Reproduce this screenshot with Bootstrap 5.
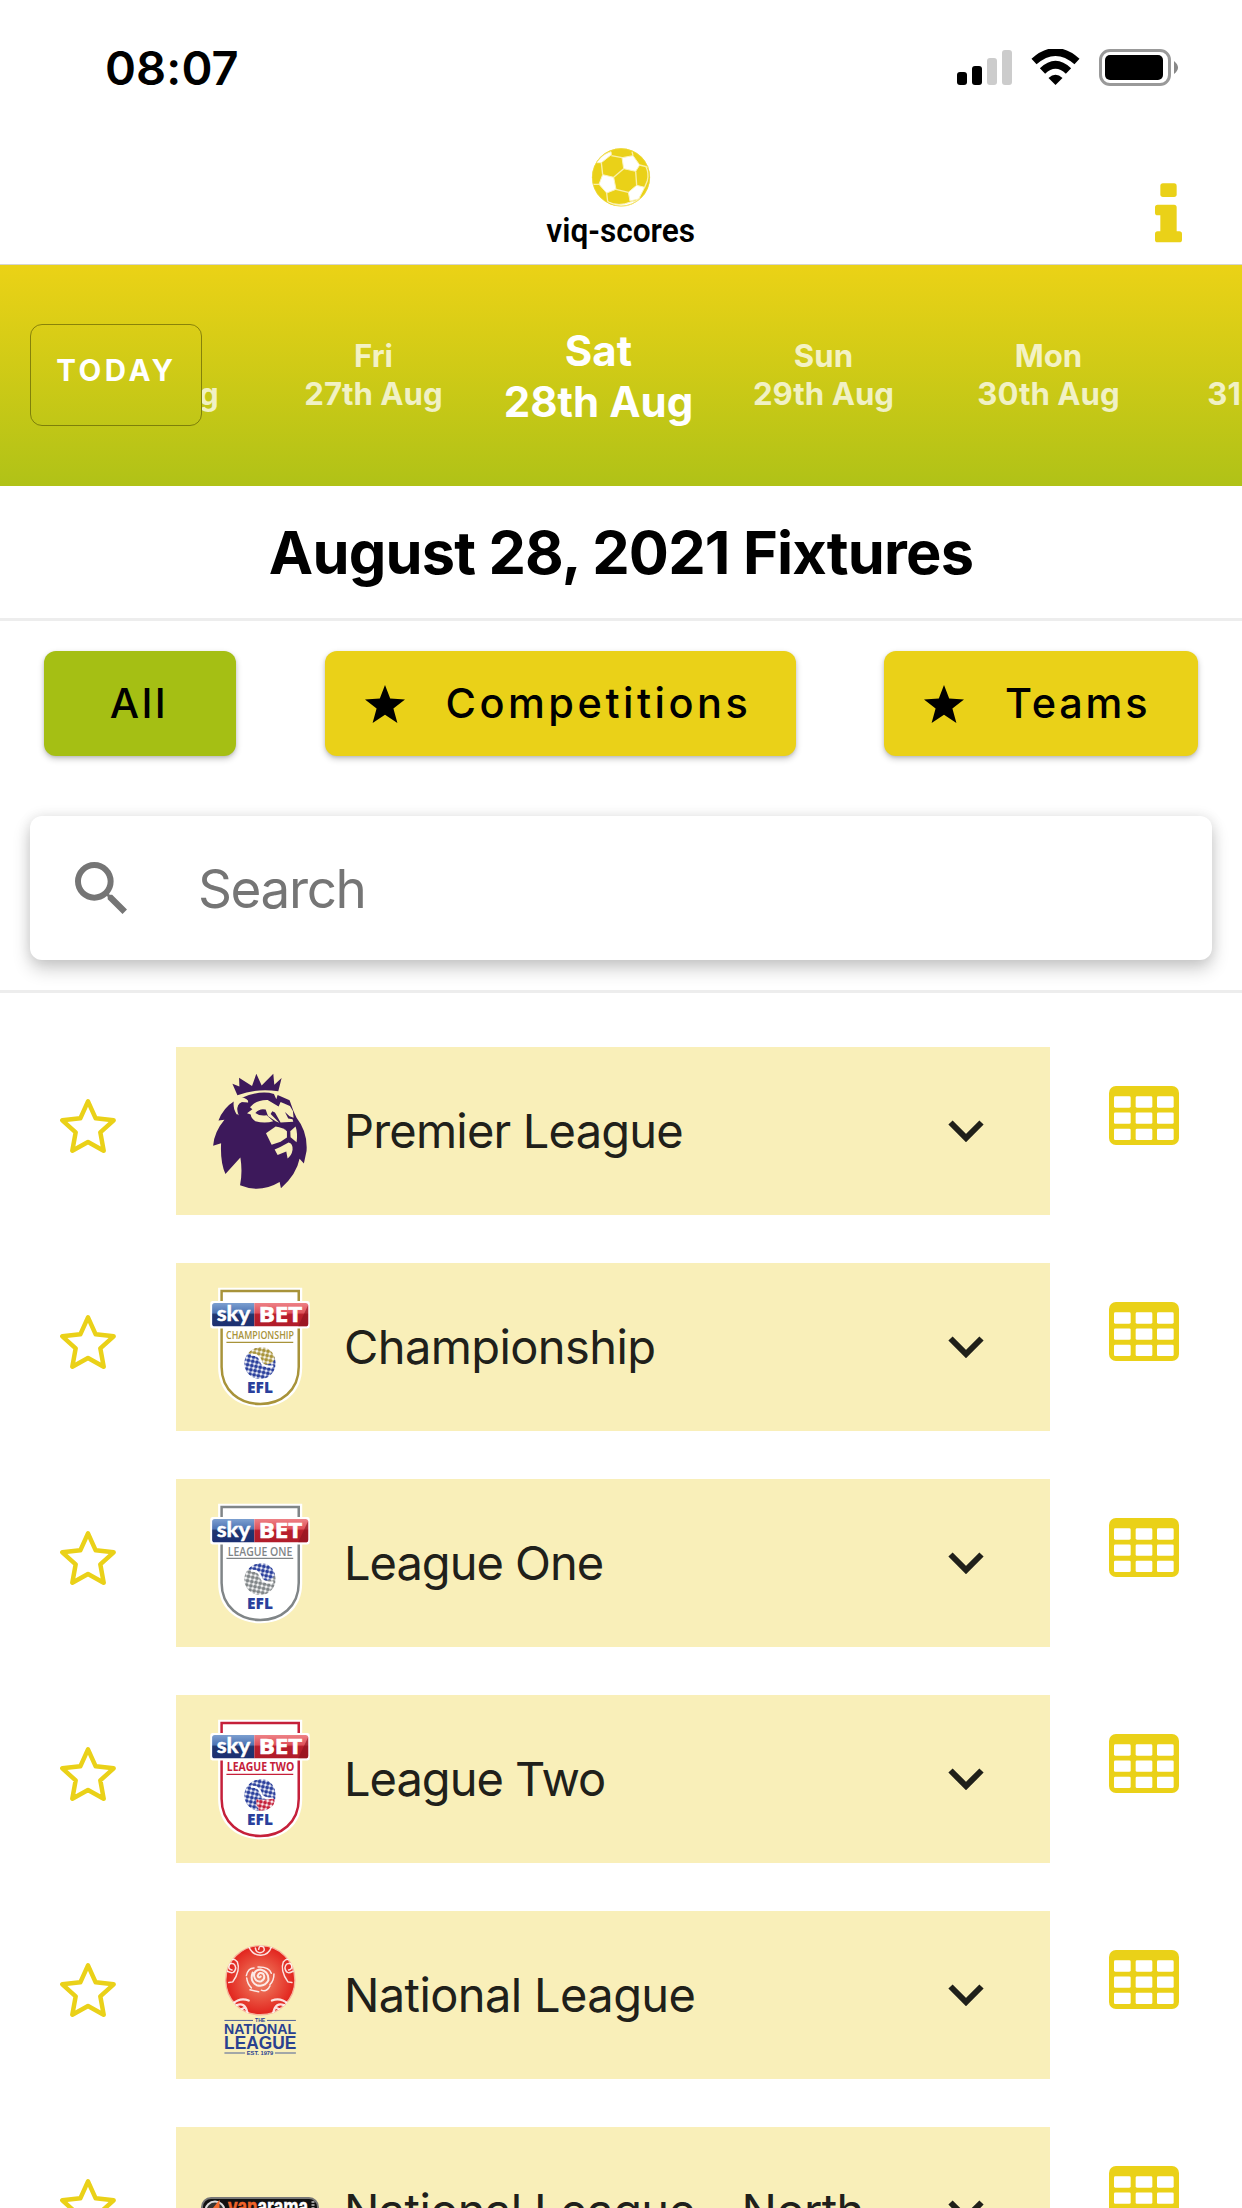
<!DOCTYPE html>
<html lang="en">
<head>
<meta charset="utf-8">
<meta name="viewport" content="width=device-width, initial-scale=1">
<title>viq-scores</title>
<link href="https://cdn.jsdelivr.net/npm/bootstrap@5.3.0/dist/css/bootstrap.min.css" rel="stylesheet">
<style>
:root{--gold:#ead118;--green:#a5bf14}
html,body{height:2208px;overflow:hidden}
body{font-family:Inter,"Liberation Sans",sans-serif;color:#000;background:#fff;width:1242px;line-height:1.2}
svg{display:block;flex:none}
.statusbar{height:135px;padding:49px 63px 0 105px}
.clock{font-size:47px;font-weight:600;line-height:38px;letter-spacing:.1px}
.topbar{height:130px;border-bottom:1px solid #d5d5d0;padding:13px 60px 0 60px}
.side{width:27px}
.info{margin-top:35px}
.dates{height:221px;background:linear-gradient(#ebd216,#b0c217);padding-left:30px}
.btn-today{width:172px;height:102px;margin-top:59px;border:1px solid rgba(70,70,0,.55);border-radius:12px;color:#fff;font-size:29.5px;font-weight:700;letter-spacing:3.5px;padding:0 0 10px 1px;flex:none}
.strip{height:221px;overflow:hidden}
.strip-in{margin-left:-166px;padding-top:72px}
.day{width:225px;flex:none;text-align:center;font-size:31.200px;font-weight:700;line-height:38px;color:rgba(255,255,255,.75);white-space:nowrap}
.day.on{color:#fff;font-size:42px;line-height:51px;margin-top:-12px}
.title{height:135px;border-bottom:3px solid #ededed;font-size:59.5px;font-weight:700;letter-spacing:-.82px;line-height:133px;margin:0;white-space:nowrap}
.filters{padding:30px 44px 0 44px;height:195px}
.filter{height:105px;border-radius:12px;border:0;font-size:41.500px;font-weight:450;letter-spacing:2.8px;color:#000;background:var(--gold);box-shadow:0 3px 6px rgba(0,0,0,.22),0 1px 3px rgba(0,0,0,.1);padding:0;flex:none;white-space:nowrap}
.filter:hover{background:var(--gold)}
.f-all{width:192px;background:var(--green);padding-right:2px}.f-comp{width:471px;letter-spacing:3.5px}.f-team{width:314px}
.fstar{margin:0 41px 0 40px}
.searchbox{height:144px;margin:0 30px;border-radius:12px;background:#fff;box-shadow:0 9px 18px rgba(0,0,0,.2),0 0 14px rgba(0,0,0,.09);padding-left:45px}
.searchbox input{border:0;outline:0;font-size:53px;font-family:inherit;color:#757575;letter-spacing:-1.4px;margin-left:71px;padding:3px 0 0;width:700px;background:none}
.searchbox input::placeholder{color:#757575;opacity:1}
.searchwrap{height:177px;border-bottom:3px solid #ededed}
.leagues{padding-top:54px}
.league{height:168px;margin-bottom:48px}
.fav{width:176px;padding:52px 0 0 60px}
.panel{width:874px;height:168px;background:#f9efb9;color:#20201a;padding:0 66px 0 34px}
.lname{font-size:47px;letter-spacing:-.6px;margin-left:34px;white-space:nowrap}
.ls-tight{letter-spacing:-1px}
.ls-mid{letter-spacing:-.8px}
.tbl{padding:39px 0 0 59px}
.sponsor{margin:0 -9px}
.s-champ{--rim:#a8933a;--d1:#a8933a;--d2:#2a3f9c}
.s-one{--rim:#808587;--d1:#2a3f9c;--d2:#808587}
.s-two{--rim:#c5203a;--d1:#2a3f9c;--d2:#2a3f9c}
</style>
</head>
<body>
<svg width="0" height="0" class="position-absolute" aria-hidden="true">
 <defs>
  <linearGradient id="gb" x2="0" y2="1"><stop offset="0" stop-color="#7c9fd0"/><stop offset=".42" stop-color="#4d74b4"/><stop offset=".5" stop-color="#20366f"/><stop offset="1" stop-color="#1c2f72"/></linearGradient>
  <linearGradient id="gr" x2="0" y2="1"><stop offset="0" stop-color="#ee8186"/><stop offset=".42" stop-color="#df525b"/><stop offset=".5" stop-color="#b91e2c"/><stop offset="1" stop-color="#b01c2a"/></linearGradient>
  <radialGradient id="rose"><stop offset="0" stop-color="#ee8a6e"/><stop offset=".55" stop-color="#e9513f"/><stop offset="1" stop-color="#e2231d"/></radialGradient>
  <pattern id="dots" width="13" height="13" patternUnits="userSpaceOnUse" patternTransform="rotate(12)"><circle cx="6.5" cy="6.5" r="6" fill="#fff"/></pattern>
  <mask id="dotmask"><rect x="150" y="220" width="120" height="120" fill="url(#dots)"/></mask>
  <symbol id="star" viewBox="90 208 168 162"><path d="M174 215l23 51 54 6-40 36 10 55-47-26-47 26 10-55-40-36 54-6z" fill="none" stroke="#ead118" stroke-width="13.500" stroke-linejoin="round"/></symbol>
  <symbol id="fstar" viewBox="0 0 40 38"><path d="M20 0l5.2 13.6L40 14.5 28.4 23.6 32.4 38 20 29.8 7.600 38 11.600 23.600 0 14.500 14.800 13.600z"/></symbol>
  <symbol id="chev" viewBox="0 0 36 22"><path d="M2.500 2.500L18 18 33.500 2.500" fill="none" stroke="#20201a" stroke-width="6"/></symbol>
  <symbol id="grid" viewBox="627 168 210 177"><rect x="627" y="168" width="210" height="177" rx="21" fill="#ead118"/><g fill="#fff"><rect x="642" y="199" width="50" height="34" rx="4"/><rect x="707" y="199" width="50" height="34" rx="4"/><rect x="771" y="199" width="50" height="34" rx="4"/><rect x="642" y="247.500" width="50" height="34" rx="4"/><rect x="707" y="247.500" width="50" height="34" rx="4"/><rect x="771" y="247.500" width="50" height="34" rx="4"/><rect x="642" y="296" width="50" height="34" rx="4"/><rect x="707" y="296" width="50" height="34" rx="4"/><rect x="771" y="296" width="50" height="34" rx="4"/></g></symbol>
  <symbol id="shield" viewBox="60 46 300 370">
   <path d="M84 51H337V290C337 370 278 411 211 411S84 370 84 290Z" fill="#fff"/>
   <path d="M94.500 61H326.500V290C326.500 362 272 401 211 401S94.500 362 94.500 290Z" fill="none" stroke="var(--rim)" stroke-width="7.500"/>
   <path d="M67 91Q60 92 60 99V166Q60 173 67 174H353Q360 173 360 166V99Q360 92 353 91Z" fill="#fff"/>
   <path d="M74 97H193V167H74Q66 167 66 160V105Q66 97 74 97Z" fill="url(#gb)"/>
   <path d="M193 97H347Q355 97 355 105V160Q355 167 347 167H193Z" fill="url(#gr)"/>
   <path d="M325 167L355 103V160Q355 167 347 167Z" fill="#8c1320" opacity=".6"/>
   <g fill="#fff" stroke="#fff" font-weight="700"><text x="80" y="150" font-size="63" font-family="Lato, Liberation Sans, sans-serif" stroke-width="1.500" textLength="101" lengthAdjust="spacingAndGlyphs">sky</text><text x="206" y="155" font-size="64" font-family="Open Sans, Liberation Sans, sans-serif" stroke-width="2" textLength="131" lengthAdjust="spacingAndGlyphs">BET</text></g>
   <path d="M109 215.500H310" stroke="var(--rim)" stroke-width="4"/>
   <g mask="url(#dotmask)"><circle cx="210" cy="279" r="47" fill="var(--d2)"/><path d="M174 250C188 226 240 218 254 260C256 274 240 284 222 282C216 268 200 252 174 250Z" fill="var(--d1)"/></g>
   <path d="M183 253Q207 249 214 276Q222 291 250 287" fill="none" stroke="#fff" stroke-width="6"/>
   <text x="171" y="369" font-size="48" font-family="Open Sans, Liberation Sans, sans-serif" font-weight="800" fill="#2a3f9c" textLength="78" lengthAdjust="spacingAndGlyphs">EFL</text>
  </symbol>
 </defs>
</svg>

<div class="statusbar d-flex justify-content-between align-items-start">
 <div class="clock">08:07</div>
 <svg width="222" height="38" viewBox="957 49 222 38">
  <rect x="957" y="72" width="10" height="13" rx="3"/><rect x="972" y="66" width="10" height="19" rx="3"/>
  <g fill="#ccc"><rect x="987" y="58" width="10" height="27" rx="3"/><rect x="1002" y="50" width="10" height="35" rx="3"/></g>
  <path d="M1034 61.500Q1055.500 42.500 1077 61.500" fill="none" stroke="#000" stroke-width="7.600"/>
  <path d="M1042.500 71Q1055.500 58.500 1068.500 71" fill="none" stroke="#000" stroke-width="7.600"/>
  <path d="M1048.500 78Q1055.500 71.500 1062.500 78L1055.500 85Z"/>
  <rect x="1100.500" y="50.500" width="69" height="34" rx="9.500" fill="none" stroke="#999" stroke-width="3"/>
  <rect x="1105" y="55" width="58" height="25" rx="5"/><path d="M1174 61Q1182 67.500 1174 74Z" fill="#888"/>
 </svg>
</div>

<header class="topbar d-flex justify-content-between">
 <div class="side"></div>
 <svg width="154" height="110" viewBox="131 54 462 330">
  <circle cx="362" cy="142" r="87" fill="#ead118"/>
  <g fill="#fff" stroke="#fbf3bc" stroke-width="3" stroke-linejoin="round">
   <path d="M289 98Q304 73 332 65L333 74 303 98Z"/><path d="M365 83L398 77 418 105 406 124 370 116Z"/><path d="M307 134L340 142 347 178 319 189 296 163Z"/><path d="M384 187L409 166 433 172 415 207 389 213Z"/><path d="M322 215Q356 231 390 216 410 214 420 205 393 229 362 229 340 226 322 215Z"/>
  </g>
  <g fill="none" stroke="#faf0a8" stroke-width="4"><path d="M333 77L365 83M303 98L307 134M340 142L370 116M406 124L409 166M384 187L347 178M319 189L322 215M277 163H296M418 105L446 112M398 77L395 65M436 108Q447 130 441 152L433 172"/><circle cx="362" cy="142" r="86" stroke="#efda40" stroke-width="2"/></g>
  <text x="138" y="336" font-family="Roboto, Liberation Sans, sans-serif" font-weight="600" font-size="99" textLength="446" lengthAdjust="spacingAndGlyphs">viq-scores</text>
 </svg>
 <svg width="27" height="60" viewBox="675 458 81 180" class="info"><g fill="#ead118"><rect x="691" y="459" width="49" height="41" rx="8"/><path d="M683 523H732Q740 523 740 531V603H748Q756 603 756 611V628Q756 636 748 636H683Q675 636 675 628V611Q675 603 683 603H691V555H683Q675 555 675 547V531Q675 523 683 523Z"/></g></svg>
</header>

<nav class="dates d-flex">
 <button class="btn btn-today">TODAY</button>
 <div class="strip flex-grow-1"><div class="strip-in d-flex">
  <div class="day">Thu<br>26th Aug</div><div class="day">Fri<br>27th Aug</div><div class="day on">Sat<br>28th Aug</div><div class="day">Sun<br>29th Aug</div><div class="day">Mon<br>30th Aug</div><div class="day">Tue<br>31st Aug</div>
 </div></div>
</nav>

<h1 class="title text-center">August 28, 2021 Fixtures</h1>

<div class="filters d-flex justify-content-between">
 <button class="btn filter f-all">All</button>
 <button class="btn filter f-comp d-flex align-items-center"><svg width="40" height="38" class="fstar"><use href="#fstar"/></svg>Competitions</button>
 <button class="btn filter f-team d-flex align-items-center"><svg width="40" height="38" class="fstar"><use href="#fstar"/></svg>Teams</button>
</div>

<div class="searchwrap">
 <div class="searchbox d-flex align-items-center">
  <svg width="52" height="52" viewBox="3 3 17.500 17.500" fill="#757575"><path d="M15.500 14h-.79l-.28-.27A6.470 6.470 0 0 0 16 9.500 6.500 6.500 0 1 0 9.500 16c1.610 0 3.090-.59 4.230-1.570l.27.28v.79l5 4.990L20.490 19l-4.990-5zm-6 0C7.010 14 5 11.990 5 9.500S7.010 5 9.500 5 14 7.010 14 9.500 11.990 14 9.500 14z"/></svg>
  <input type="text" placeholder="Search" aria-label="Search">
 </div>
</div>

<main class="leagues">
 <div class="league d-flex">
  <div class="fav"><svg width="56" height="54"><use href="#star"/></svg></div>
  <div class="panel d-flex align-items-center">
   <svg width="100" height="123" viewBox="540 118 300 370">
    <path fill="#3d195b" d="M622 194L607 159 628 168 627 141 666 166 679 129 695 165 730 129 733 162 755 142 745 182Q680 172 622 194Z"/>
    <path fill="#3d195b" d="M634 202Q690 178 732 190L739 206 743 193 779 209 790 240 800 262Q834 305 830 362L822 399 809 385Q800 432 753 474L749 455Q690 490 630 465Q638 425 631 381L586 431Q570 395 573 338L549 346Q552 305 583 268L565 270Q580 232 611 213Q608 235 622 254 616 224 634 214L654 216 652 208Z"/>
    <g fill="#f9efb9">
     <path d="M612 214Q618 199 638 201 652 204 655 215 632 210 624 222 618 235 626 255 609 238 612 214Z"/>
     <path d="M651 248L667 236 660 230Q678 207 713 208L746 228 752 214 780 226 789 241 791 262 779 257 765 244 775 264 788 266 790 274 752 276 735 246 727 242 722 250 748 277 737 272 714 256 707 237Q690 232 676 247 690 258 710 254L730 272Q705 280 676 272 664 265 662 252Z"/>
     <path d="M708 308L737 288Q760 292 771 302V321L752 334 725 343Z"/>
     <path d="M781 302L797 288Q804 308 800 335L782 320Z"/>
     <path d="M734 357L751 350 776 336Q789 338 788 358 785 376 773 384L769 363 743 374Z"/>
    </g>
   </svg>
   <div class="lname ls-mid">Premier League</div>
   <svg width="36" height="22" class="ms-auto"><use href="#chev"/></svg>
  </div>
  <div class="tbl"><svg width="70" height="59"><use href="#grid"/></svg></div>
 </div>

 <div class="league d-flex">
  <div class="fav"><svg width="56" height="54"><use href="#star"/></svg></div>
  <div class="panel d-flex align-items-center">
   <svg class="s-champ" width="100" height="123" viewBox="0 0 300 370"><use href="#shield" width="300" height="370"/><text x="48" y="159" font-family="Open Sans, sans-serif" font-weight="600" font-size="31" fill="#a8933a" textLength="204" lengthAdjust="spacingAndGlyphs">CHAMPIONSHIP</text></svg>
   <div class="lname">Championship</div>
   <svg width="36" height="22" class="ms-auto"><use href="#chev"/></svg>
  </div>
  <div class="tbl"><svg width="70" height="59"><use href="#grid"/></svg></div>
 </div>

 <div class="league d-flex">
  <div class="fav"><svg width="56" height="54"><use href="#star"/></svg></div>
  <div class="panel d-flex align-items-center">
   <svg class="s-one" width="100" height="123" viewBox="0 0 300 370"><use href="#shield" width="300" height="370"/><text x="53" y="161" font-family="Open Sans, sans-serif" font-weight="600" font-size="35" fill="#808587" textLength="194" lengthAdjust="spacingAndGlyphs">LEAGUE ONE</text></svg>
   <div class="lname ls-tight">League One</div>
   <svg width="36" height="22" class="ms-auto"><use href="#chev"/></svg>
  </div>
  <div class="tbl"><svg width="70" height="59"><use href="#grid"/></svg></div>
 </div>

 <div class="league d-flex">
  <div class="fav"><svg width="56" height="54"><use href="#star"/></svg></div>
  <div class="panel d-flex align-items-center">
   <svg class="s-two" width="100" height="123" viewBox="0 0 300 370"><defs><mask id="dotmask2"><rect x="100" y="180" width="120" height="120" fill="url(#dots)"/></mask></defs><use href="#shield" width="300" height="370"/><path d="M140 244Q160 248 192 242 196 250 190 262 176 280 148 279 136 262 140 244Z" fill="#fff"/><path d="M140 244Q160 248 192 242 196 250 190 262 176 280 148 279 136 262 140 244Z" fill="#c5203a" mask="url(#dotmask2)"/><text x="50" y="159" font-family="Open Sans, sans-serif" font-weight="700" font-size="35" fill="#c5203a" textLength="203" lengthAdjust="spacingAndGlyphs">LEAGUE TWO</text></svg>
   <div class="lname ls-tight">League Two</div>
   <svg width="36" height="22" class="ms-auto"><use href="#chev"/></svg>
  </div>
  <div class="tbl"><svg width="70" height="59"><use href="#grid"/></svg></div>
 </div>

 <div class="league d-flex">
  <div class="fav"><svg width="56" height="54"><use href="#star"/></svg></div>
  <div class="panel d-flex align-items-center">
   <svg width="100" height="123" viewBox="60 40 300 370">
    <clipPath id="nb"><circle cx="211" cy="179" r="106"/></clipPath>
    <circle cx="211" cy="179" r="104" fill="url(#rose)" stroke="#f6b39c" stroke-width="4"/>
    <g clip-path="url(#nb)" fill="none" stroke="#fff" stroke-opacity=".85" stroke-width="4.500" stroke-linecap="round">
     <path d="M177 80Q190 105 213 104 236 103 244 80M196 82Q198 98 213 96 228 92 220 79 208 72 206 86"/>
     <path d="M108 132Q126 104 142 124 152 150 128 184L116 186M112 152Q134 164 137 142 134 124 118 130 112 146 126 148"/>
     <path d="M312 132Q296 104 280 124 270 150 294 184L306 186M309 152Q288 164 285 142 288 124 304 130 310 146 296 148"/>
     <path d="M128 250Q150 230 176 240M140 254Q164 244 172 276M150 268L164 262" stroke-width="7"/>
     <path d="M294 250Q272 230 246 240M282 254Q258 244 250 276M272 268L258 262" stroke-width="7"/>
     <path d="M169 165Q174 142 192 142M204 139Q238 138 244 158M252 160Q252 180 240 192M240 196Q230 216 214 209M180 208L206 214M170 172Q172 190 184 202"/>
     <path d="M188 156Q178 182 200 194 224 200 235 180 238 154 212 147 192 148 192 166 196 186 214 182 228 174 220 160 208 152 203 166 206 174 212 168" stroke-width="6"/>
    </g>
    <g font-family="Liberation Sans, sans-serif" font-weight="700" fill="#2a4190"><text x="195" y="305" font-size="15" textLength="31" lengthAdjust="spacingAndGlyphs">THE</text><text x="102" y="341" font-size="43" textLength="217" lengthAdjust="spacingAndGlyphs">NATIONAL</text><text x="102" y="387" font-size="55" textLength="217" lengthAdjust="spacingAndGlyphs">LEAGUE</text><text x="170" y="405" font-size="17" textLength="80" lengthAdjust="spacingAndGlyphs">EST. 1979</text></g>
    <path d="M103 300H189M231 300H318M103 398H165M255 398H318" stroke="#2a4190" stroke-width="2.500"/>
   </svg>
   <div class="lname">National League</div>
   <svg width="36" height="22" class="ms-auto"><use href="#chev"/></svg>
  </div>
  <div class="tbl"><svg width="70" height="59"><use href="#grid"/></svg></div>
 </div>

 <div class="league d-flex">
  <div class="fav"><svg width="56" height="54"><use href="#star"/></svg></div>
  <div class="panel d-flex align-items-center">
   <svg class="sponsor" width="118" height="28" viewBox="0 0 118 28"><rect x="1" y="1" width="116" height="26" rx="9" fill="#111" stroke="#777" stroke-width="2"/><circle cx="14" cy="14" r="9.500" fill="#333" stroke="#ddd" stroke-width="2"/><path d="M10 16L17 7V20" stroke="#f26a2e" stroke-width="3" fill="none"/><text x="27" y="17" font-family="Liberation Sans, sans-serif" font-weight="700" font-size="22" fill="#fff" stroke="#fff" stroke-width=".6" textLength="80" lengthAdjust="spacingAndGlyphs"><tspan fill="#f0642a" stroke="#f0642a">van</tspan>arama</text><path d="M112 4V12" stroke="#999" stroke-width="3" stroke-dasharray="2 1"/></svg>
   <div class="lname">National League - North</div>
   <svg width="36" height="22" class="ms-auto"><use href="#chev"/></svg>
  </div>
  <div class="tbl"><svg width="70" height="59"><use href="#grid"/></svg></div>
 </div>
</main>
<script src="https://cdn.jsdelivr.net/npm/bootstrap@5.3.0/dist/js/bootstrap.bundle.min.js"></script>
</body>
</html>
